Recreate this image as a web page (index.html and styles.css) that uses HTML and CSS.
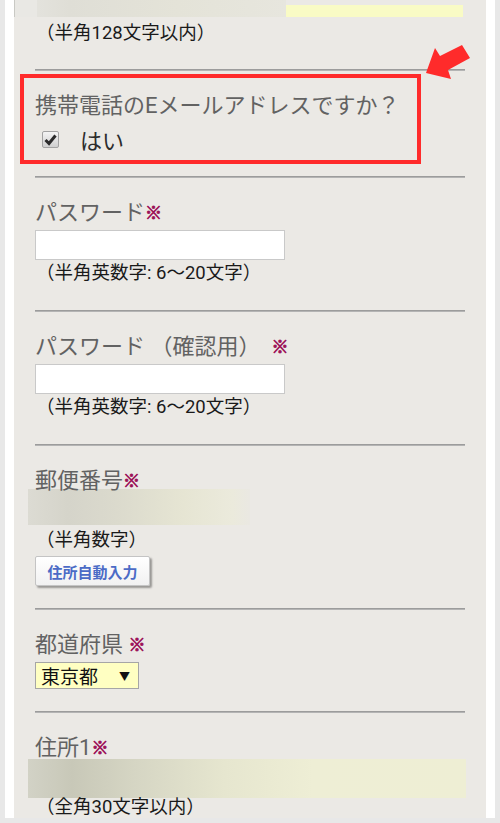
FILE: index.html
```html
<!DOCTYPE html>
<html lang="ja">
<head>
    <meta charset="UTF-8">
    <title>会員登録</title>
    <link rel="stylesheet" href="styles.css">
</head>
<body>
<div class="page">
    <div class="form">
        <div class="cut-field">
            <div class="cut-blur"></div>
            <div class="cut-yellow"></div>
        </div>
        <p class="note note-first">（半角128文字以内）</p>
        <hr class="rule rule-first">

        <div class="highlight">
            <div class="label">携帯電話のEメールアドレスですか？</div>
            <label class="check-row">
                <span class="checkbox">
                    <svg width="13" height="13" viewBox="0 0 13 13"><path d="M1.5 7 L5 10.5 L11.5 2.5" fill="none" stroke="#2b2b2b" stroke-width="3"/></svg>
                </span>
                はい
            </label>
        </div>
        <hr class="rule rule-box">

        <div class="field">
            <div class="label">パスワード<span class="req">※</span></div>
            <div class="text-input"></div>
            <p class="note">（半角英数字: 6〜20文字）</p>
        </div>
        <hr class="rule">

        <div class="field">
            <div class="label">パスワード （確認用）&nbsp; <span class="req">※</span></div>
            <div class="text-input"></div>
            <p class="note">（半角英数字: 6〜20文字）</p>
        </div>
        <hr class="rule">

        <div class="field field-short">
            <div class="label">郵便番号<span class="req">※</span></div>
            <div class="blur-input blur-zip"></div>
            <p class="note">（半角数字）</p>
            <button class="zip-btn" type="button">住所自動入力</button>
        </div>
        <hr class="rule">

        <div class="field field-short">
            <div class="label">都道府県 <span class="req">※</span></div>
            <div class="select">
                <span>東京都</span>
                <span class="select-arrow">▼</span>
            </div>
        </div>
        <hr class="rule">

        <div class="field field-last">
            <div class="label">住所1<span class="req">※</span></div>
            <div class="blur-input blur-addr"></div>
            <p class="note note-last">（全角30文字以内）</p>
        </div>

        <svg class="pointer" width="56" height="44" viewBox="0 0 56 44">
            <polygon points="6,33 15,8 20,16 42,5 50,18 28,30 31,39" fill="#ff2b2b"/>
        </svg>
    </div>
</div>
</body>
</html>
```

FILE: styles.css
```css
html, body{
    margin: 0;
    padding: 0;
}
body{
    background: #e8e8e8;
    font-family: Roboto, "Noto Sans CJK JP", sans-serif;
    padding: 0 5px 5px;
    height: 818px;
    overflow: hidden;
}
.page{
    background: #fff;
    padding: 0 9px;
    height: 818px;
}
.form{
    background: #ebe9e5;
    padding: 0 21px;
    height: 818px;
    position: relative;
}
.cut-field{
    display: flex;
    height: 17px;
    margin-left: -21px;
}
.cut-blur{
    width: 271px;
    height: 17px;
    background: linear-gradient(90deg, #e6e5e1 0%, #dfded6 20%, #e4e3d8 60%, #e7e6de 100%);
    border-left: 1px solid #c9c9c4;
    box-shadow: inset 22px 0 0 #e9e8e4;
}
.cut-yellow{
    width: 177px;
    height: 12px;
    margin-top: 5px;
    background: #f9fbc5;
}
.note{
    margin: 2px 0 0;
    height: 22px;
    font-size: 18.5px;
    line-height: 22px;
    color: #1a1a1a;
    padding-left: 1px;
    white-space: nowrap;
}
.note-first{
    margin-top: 5px;
}
.rule{
    border: 0;
    height: 0;
    margin: 0;
    border-top: 1px solid #9c9c9c;
    border-bottom: 1px solid #b4b4b4;
}
.rule-first{
    margin-top: 25px;
}
.rule-box{
    margin-top: 12px;
}
.highlight{
    margin: 3px 0 0 -15px;
    width: 401px;
    height: 90px;
    box-sizing: border-box;
    border: 4px solid #ff2b2b;
    padding: 15px 0 0 11px;
}
.label{
    height: 26px;
    font-size: 22px;
    line-height: 26px;
    color: #626262;
    white-space: nowrap;
}
.req{
    font-size: 17px;
    font-weight: bold;
    color: #9c1258;
    -webkit-text-stroke: 0.8px #9c1258;
    vertical-align: 1px;
}
.check-row{
    display: flex;
    align-items: center;
    margin-top: 7px;
    height: 26px;
    font-size: 22px;
    color: #2c2c2c;
}
.checkbox{
    display: flex;
    align-items: center;
    justify-content: center;
    width: 17px;
    height: 17px;
    box-sizing: border-box;
    margin: 0 21px 0 7px;
    border: 1px solid #a2a2a2;
    border-radius: 2px;
    background: linear-gradient(#f4f4f4, #cfcfcf);
}
.field{
    padding: 22px 0 26px;
}
.field-short{
    padding-bottom: 22px;
}
.field-last{
    padding-bottom: 0;
}
.text-input{
    margin-top: 4px;
    width: 250px;
    height: 30px;
    box-sizing: border-box;
    background: #fff;
    border: 1px solid #c9c9c9;
}
.blur-input{
    margin-left: -7px;
}
.blur-zip{
    margin-top: -5px;
    width: 222px;
    height: 36px;
    background: linear-gradient(90deg, #dcdbd3 0%, #d5d4ca 18%, #dbdacd 40%, #e6e5d3 70%, #ebeadc 92%, #eae8e2 100%);
}
.blur-zip + .note{
    margin-top: 4px;
}
.blur-addr{
    margin-top: -2px;
    width: 438px;
    height: 39px;
    background: linear-gradient(90deg, #d2d2c6 0%, #c8c8b8 10%, #d6d6c4 25%, #e6e6cf 45%, #eeeed5 65%, #eeeed4 100%);
}
.note-last{
    margin-top: -1px;
    height: 20px;
    line-height: 20px;
}
.zip-btn{
    display: block;
    margin-top: 5px;
    width: 115px;
    height: 30px;
    padding: 0;
    background: linear-gradient(#ffffff, #f1f1f1);
    border: 1px solid #c4c4c4;
    border-radius: 2px;
    box-shadow: 2px 2px 2px rgba(0,0,0,.35);
    font-family: "Noto Sans CJK JP", sans-serif;
    font-size: 15px;
    font-weight: bold;
    color: #4b6bc6;
}
.select{
    margin-top: 4px;
    width: 104px;
    height: 27px;
    box-sizing: border-box;
    display: flex;
    align-items: center;
    justify-content: space-between;
    padding: 0 8px 0 5px;
    background: #ffffc2;
    border: 1px solid #a6a6a6;
    font-size: 19px;
    color: #111;
}
.select-arrow{
    font-size: 11px;
}
.pointer{
    position: absolute;
    left: 406px;
    top: 40px;
}
```
